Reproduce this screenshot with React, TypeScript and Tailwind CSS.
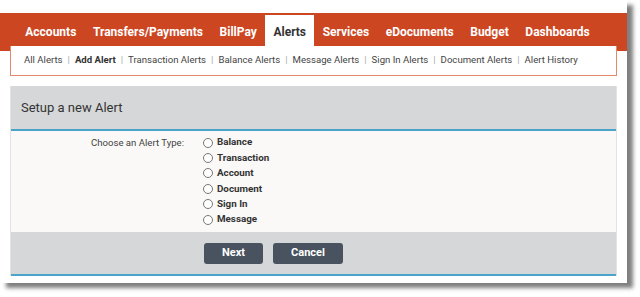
import React from 'react';

const tabs = ['Accounts', 'Transfers/Payments', 'BillPay', 'Alerts', 'Services', 'eDocuments', 'Budget', 'Dashboards'];
const subLinks = [
  'All Alerts',
  'Add Alert',
  'Transaction Alerts',
  'Balance Alerts',
  'Message Alerts',
  'Sign In Alerts',
  'Document Alerts',
  'Alert History',
];
const alertTypes = ['Balance', 'Transaction', 'Account', 'Document', 'Sign In', 'Message'];

export default function App() {
  return (
    <div className="h-[297px] w-[640px] overflow-hidden bg-white font-['Roboto',sans-serif]">
      <div className="h-[283px] w-[627px] bg-white pt-[13px] shadow-[6px_5px_4px_rgba(0,0,0,0.5)]">
        <div className="bg-[linear-gradient(to_bottom,#cd4622_38px,#ffffff_38px)]">
          <nav className="flex h-[33px] items-end pl-[17px]">
            {tabs.map((tab) => (
              <div
                key={tab}
                className={
                  tab === 'Alerts'
                    ? 'flex h-[31px] items-center bg-white px-[8.3px] pt-[2px] text-[12px] font-bold text-[#333]'
                    : 'flex h-[31px] items-center px-[8.3px] pt-[2px] text-[12px] font-bold text-white'
                }
              >
                {tab}
              </div>
            ))}
          </nav>
          <div className="mx-[10px] flex h-[30px] items-center border-x border-b border-[#e0896d] bg-white pl-[13px] text-[9.6px] text-[#444]">
            {subLinks.map((link, i) => (
              <React.Fragment key={link}>
                {i > 0 ? <span className="px-[5px] text-[#aaa]">|</span> : null}
                <span className={link === 'Add Alert' ? 'font-bold text-[#333]' : ''}>{link}</span>
              </React.Fragment>
            ))}
          </div>
        </div>

        <section className="mx-[10px] mt-[10px] border-x border-[#e3e3e3]">
          <div className="flex h-[45px] items-center border-b-2 border-[#4aa3c8] bg-[#d6d7d9] pl-[10px] text-[13px] text-[#333]">
            Setup a new Alert
          </div>
          <div className="flex bg-[#faf9f7] pb-[5px] pt-[4px]">
            <div className="flex h-[15.4px] w-[173px] items-center justify-end text-[9.6px] text-[#444]">
              Choose an Alert Type:
            </div>
            <div className="ml-[19px] flex flex-col">
              {alertTypes.map((type) => (
                <label key={type} className="flex h-[15.4px] items-center gap-[4px] text-[9.8px] font-bold text-[#333]">
                  <span className="h-[10px] w-[10px] rounded-full border border-[#777] bg-white" />
                  {type}
                </label>
              ))}
            </div>
          </div>
          <div className="flex h-[44px] items-center gap-[10px] border-b-2 border-[#4aa3c8] bg-[#d6d7d9] pl-[193px]">
            <button
              type="button"
              className="h-[21px] w-[59px] rounded-[3px] bg-[#48535f] text-[11px] font-bold text-white"
            >
              Next
            </button>
            <button
              type="button"
              className="h-[21px] w-[70px] rounded-[3px] bg-[#48535f] text-[11px] font-bold text-white"
            >
              Cancel
            </button>
          </div>
        </section>
      </div>
    </div>
  );
}
